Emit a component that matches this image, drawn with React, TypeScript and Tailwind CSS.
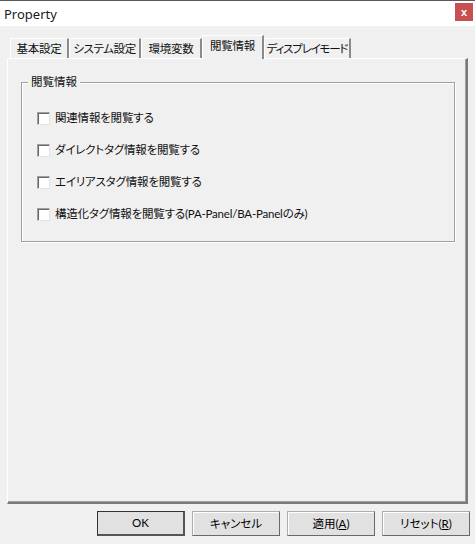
import React from "react";

const tabs = [
  { label: "基本設定", w: "w-[59px]", t: "tracking-[-0.2px]" },
  { label: "システム設定", w: "w-[72px]", t: "tracking-[-0.4px]" },
  { label: "環境変数", w: "w-[61px]", t: "tracking-[-0.2px]" },
  { label: "閲覧情報", w: "w-[62px]", t: "tracking-[-0.2px]", active: true },
  { label: "ディスプレイモード", w: "w-[87px]", t: "tracking-[-1.2px]" },
];

const options = [
  "関連情報を閲覧する",
  "ダイレクトタグ情報を閲覧する",
  "エイリアスタグ情報を閲覧する",
  "構造化タグ情報を閲覧する(PA-Panel/BA-Panelのみ)",
];

function Checkbox() {
  return (
    <div className="w-[13px] h-[13px] shrink-0 bg-white border-t border-l border-[#a0a0a0] border-r-[#e3e3e3] border-b-[#e3e3e3] border-r border-b shadow-[inset_1px_1px_0_#696969]" />
  );
}

function Button({
  children,
  primary,
}: {
  children: React.ReactNode;
  primary?: boolean;
}) {
  return (
    <button
      className={`w-[88px] h-[25px] flex items-center justify-center text-[11.5px] leading-none text-black bg-[#e1e1e1] ${
        primary
          ? "border border-[#333333] border-r-2 border-b-2 border-r-[#555555] border-b-[#555555]"
          : "border border-[#adadad] border-r-[#696969] border-b-[#696969] shadow-[inset_1px_1px_0_#ffffff]"
      }`}
    >
      {children}
    </button>
  );
}

export default function App() {
  return (
    <div className="w-[475px] h-[544px] bg-[#f0f0f0] flex flex-col font-['Lato','Noto_Sans_CJK_JP',sans-serif] [font-feature-settings:'palt'] text-black overflow-hidden">
      {/* Title bar */}
      <div className="h-[26px] shrink-0 bg-white border-t border-[#5a5a5a] flex items-start justify-between pl-[4px] pr-[2px]">
        <span className="text-[13px] leading-none mt-[7px] text-[#1a1a1a] font-['Noto_Sans',sans-serif]">Property</span>
        <div className="w-[18px] h-[18px] mt-[2px] bg-[#c75050] flex items-center justify-center">
          <span className="text-white text-[11px] font-bold leading-none font-['Liberation_Sans',sans-serif]">x</span>
        </div>
      </div>

      {/* Tabs + panel */}
      <div className="flex flex-col pl-[7px] pt-[8px]">
        <div className="flex items-end h-[24px] pl-[3px] relative z-10">
          {tabs.map((t) =>
            t.active ? (
              <div
                key={t.label}
                className={`${t.w} ${t.t} h-[24px] -mb-px bg-[#f0f0f0] border-t border-l border-white border-r-2 border-r-[#8a8a8a] flex justify-center pt-[4px] text-[11.5px] leading-none whitespace-nowrap text-[#111]`}
              >
                {t.label}
              </div>
            ) : (
              <div
                key={t.label}
                className={`${t.w} ${t.t} h-[20px] bg-[#f0f0f0] border-t border-l border-white border-r-2 border-r-[#8a8a8a] flex justify-center pt-[4px] text-[11.5px] leading-none whitespace-nowrap text-[#111]`}
              >
                {t.label}
              </div>
            )
          )}
        </div>
        <div className="w-[461px] h-[446px] border-t border-l border-white border-r-2 border-b-2 border-r-[#7a7a7a] border-b-[#7a7a7a] shadow-[inset_-1px_-1px_0_#a0a0a0]">
          {/* Group box */}
          <div className="relative mt-[23px] ml-[13px] w-[434px] h-[160px] border border-[#a0a0a0] shadow-[1px_1px_0_#ffffff,inset_1px_1px_0_#ffffff]">
            <span className="absolute -top-[7px] left-[6px] px-[3px] bg-[#f0f0f0] text-[11.5px] leading-none text-[#111]">
              閲覧情報
            </span>
            <div className="flex flex-col gap-[16px] pt-[27px] pl-[15px]">
              {options.map((o) => (
                <div key={o} className="flex items-center h-[16px] gap-[5px]">
                  <Checkbox />
                  <span className="text-[11.5px] tracking-[-0.2px] leading-none text-[#111] whitespace-nowrap">{o}</span>
                </div>
              ))}
            </div>
          </div>
        </div>
      </div>

      {/* Buttons */}
      <div className="flex justify-end gap-[7px] pr-[5px] mt-[7px]">
        <Button primary>OK</Button>
        <Button>キャンセル</Button>
        <Button>
          適用(<span className="underline">A</span>)
        </Button>
        <Button>
          リセット(<span className="underline">R</span>)
        </Button>
      </div>
    </div>
  );
}
